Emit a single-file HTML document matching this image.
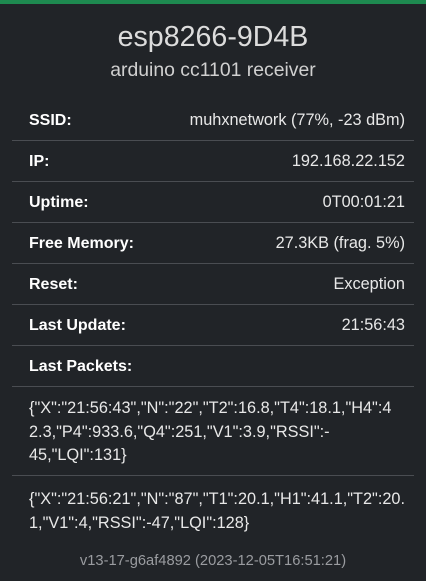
<!DOCTYPE html><html><head><style>
body{margin:0;width:426px;height:581px;background:#212428;font-family:"Liberation Sans",sans-serif;color:#e8e8e8;position:relative;overflow:hidden}
.bar{position:absolute;top:0;left:0;width:426px;height:4px;background:#1e8a50}
.t{position:absolute;left:0;width:426px;text-align:center;white-space:nowrap}
.row{position:absolute;left:12px;width:402px;height:40px;border-bottom:1px solid #4a4d52;font-size:16.3px;line-height:41px}
.row b{position:absolute;left:17px;color:#fff;font-size:16px}
.row span{position:absolute;right:9px}
.pk{position:absolute;left:29px;font-size:16.3px;line-height:23.5px;white-space:nowrap}
.ln{position:absolute;left:12px;width:402px;height:1px;background:#4a4d52}
</style></head><body>
<div class="bar"></div>
<div class="t" style="top:21px;font-size:28.6px;color:#dcdcdc">esp8266-9D4B</div>
<div class="t" style="top:59px;font-size:19.4px;color:#d0d0d0">arduino cc1101 receiver</div>
<div class="row" style="top:100px"><b>SSID:</b><span>muhxnetwork (77%, -23 dBm)</span></div>
<div class="row" style="top:141px"><b>IP:</b><span>192.168.22.152</span></div>
<div class="row" style="top:182px"><b>Uptime:</b><span>0T00:01:21</span></div>
<div class="row" style="top:223px"><b>Free Memory:</b><span>27.3KB (frag. 5%)</span></div>
<div class="row" style="top:264px"><b>Reset:</b><span>Exception</span></div>
<div class="row" style="top:305px"><b>Last Update:</b><span>21:56:43</span></div>
<div class="row" style="top:346px"><b>Last Packets:</b></div>
<div class="pk" style="top:397px">{"X":"21:56:43","N":"22","T2":16.8,"T4":18.1,"H4":4<br>2.3,"P4":933.6,"Q4":251,"V1":3.9,"RSSI":-<br>45,"LQI":131}</div>
<div class="ln" style="top:475px"></div>
<div class="pk" style="top:488px">{"X":"21:56:21","N":"87","T1":20.1,"H1":41.1,"T2":20.<br>1,"V1":4,"RSSI":-47,"LQI":128}</div>
<div class="t" style="top:553px;font-size:14.7px;color:#9a9ca0">v13-17-g6af4892 (2023-12-05T16:51:21)</div>
</body></html>
